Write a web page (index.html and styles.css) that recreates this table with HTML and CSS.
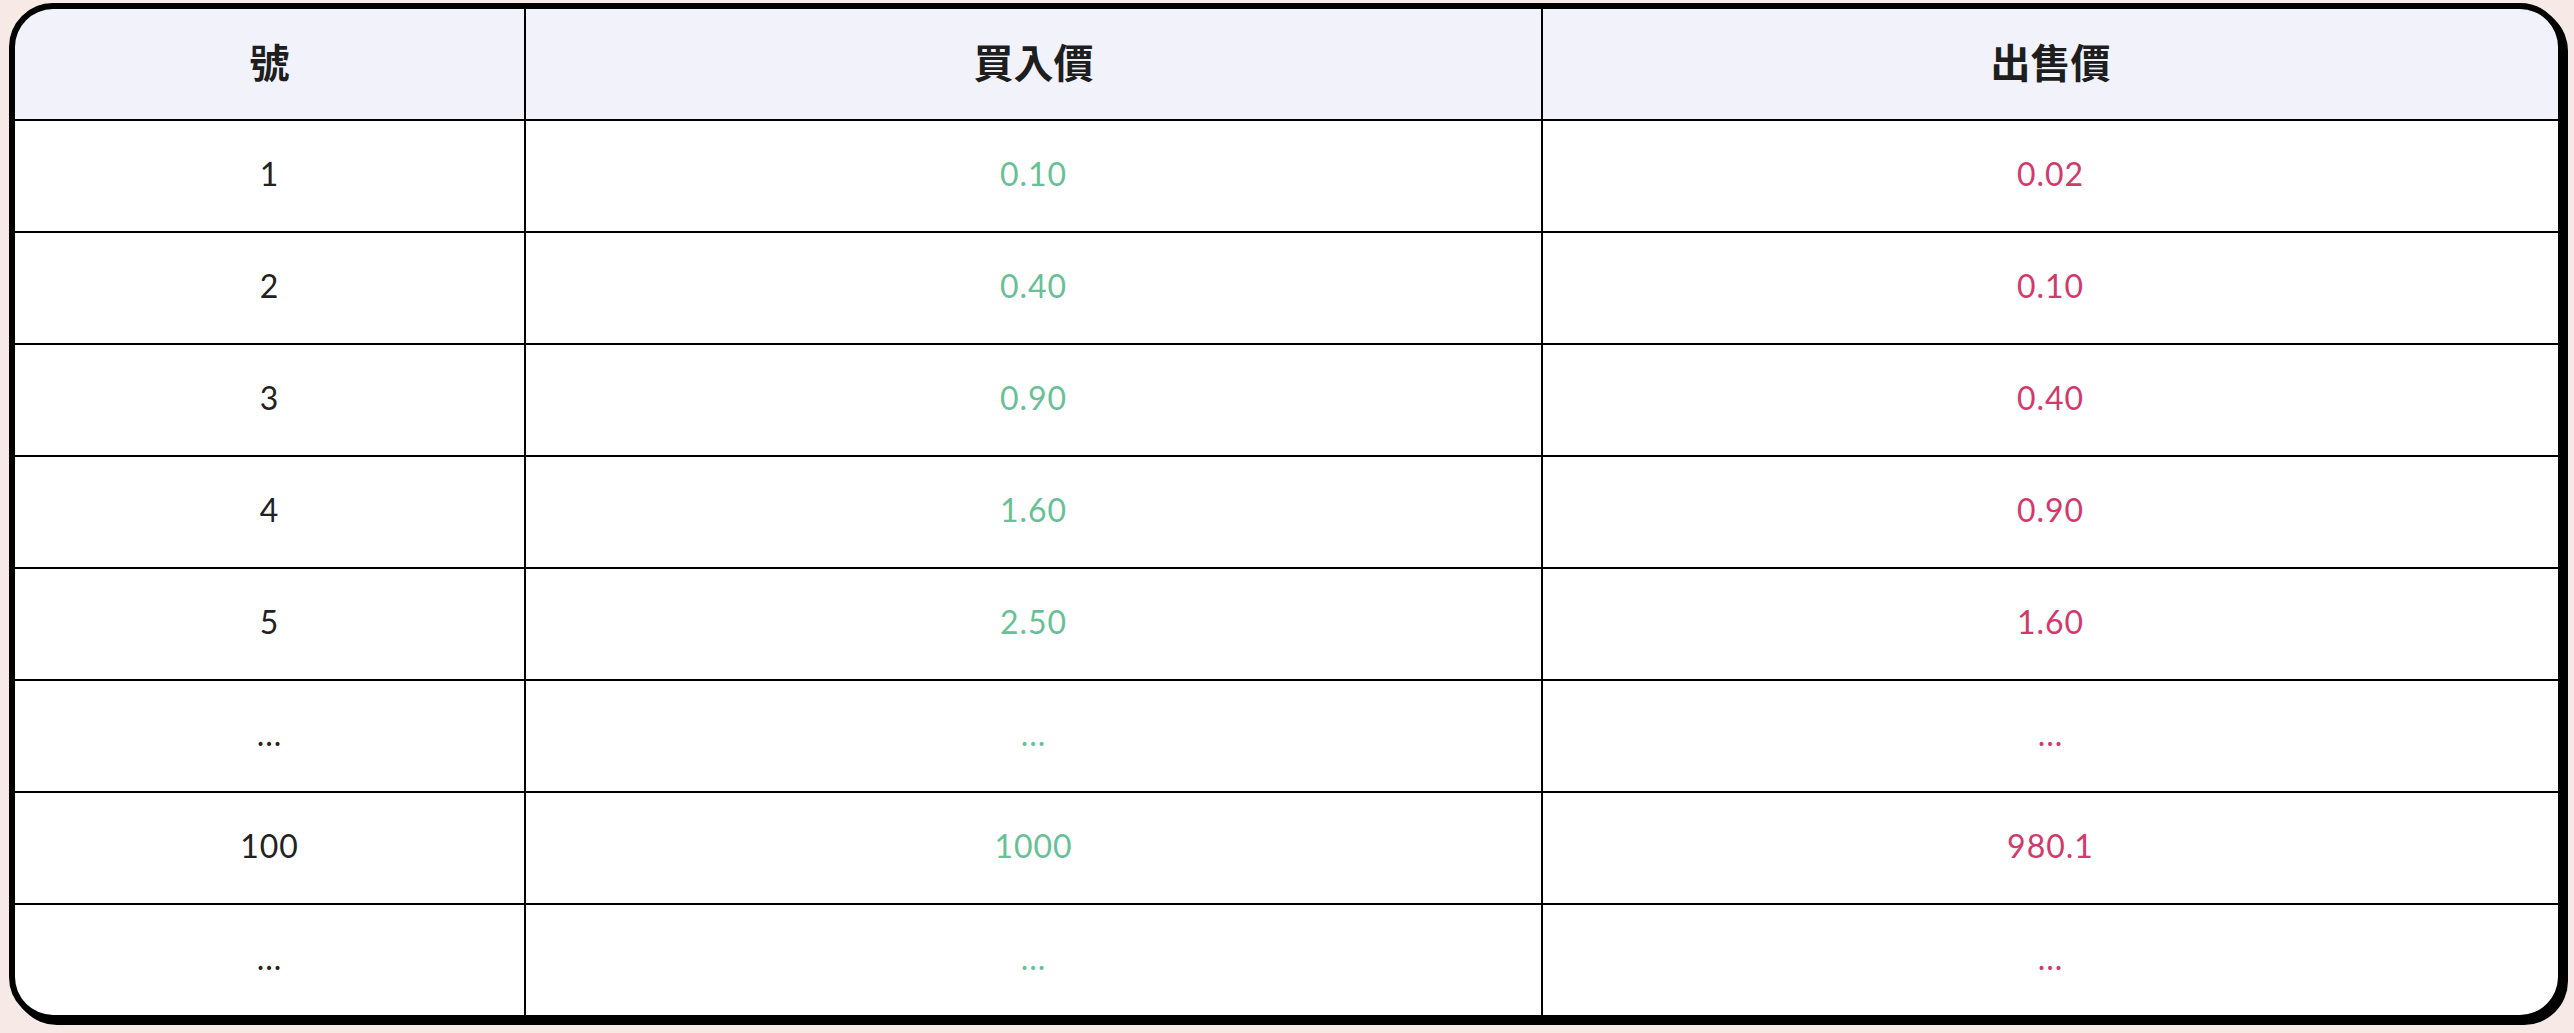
FILE: index.html
```html
<!DOCTYPE html>
<html lang="zh-Hant">
<head>
<meta charset="utf-8">
<title>價格表</title>
<link rel="stylesheet" href="styles.css">
</head>
<body>
<div class="table">
  <div class="cell head">號</div>
  <div class="cell head">買入價</div>
  <div class="cell head">出售價</div>

  <div class="cell num">1</div>
  <div class="cell buy">0.10</div>
  <div class="cell sell">0.02</div>

  <div class="cell num">2</div>
  <div class="cell buy">0.40</div>
  <div class="cell sell">0.10</div>

  <div class="cell num">3</div>
  <div class="cell buy">0.90</div>
  <div class="cell sell">0.40</div>

  <div class="cell num">4</div>
  <div class="cell buy">1.60</div>
  <div class="cell sell">0.90</div>

  <div class="cell num">5</div>
  <div class="cell buy">2.50</div>
  <div class="cell sell">1.60</div>

  <div class="cell num">...</div>
  <div class="cell buy">...</div>
  <div class="cell sell">...</div>

  <div class="cell num">100</div>
  <div class="cell buy">1000</div>
  <div class="cell sell">980.1</div>

  <div class="cell num">...</div>
  <div class="cell buy">...</div>
  <div class="cell sell">...</div>
</div>
</body>
</html>
```

FILE: styles.css
```css
html, body {
  margin: 0;
  padding: 0;
}

body {
  background: #f7eae6;
  padding: 3px 0 0 9px;
  width: 2574px;
  height: 1033px;
  box-sizing: border-box;
  overflow: hidden;
}

.table {
  box-sizing: border-box;
  width: 2555px;
  height: 1018px;
  border: 6px solid #000;
  border-radius: 44px;
  box-shadow: 4px 4px 0 #000;
  overflow: hidden;
  background: #000;
  display: grid;
  grid-template-columns: 509px 1015px 1fr;
  grid-auto-rows: 110px;
  gap: 2px;
}

.cell {
  box-sizing: border-box;
  background: #ffffff;
  display: flex;
  align-items: center;
  justify-content: center;
  padding-bottom: 5px;
  font-family: Lato, "Noto Sans", sans-serif;
  font-size: 32px;
  letter-spacing: 1px;
  color: #222222;
}

.head {
  background: #f1f2fa;
  font-family: "Noto Sans CJK TC", "Noto Sans CJK SC", sans-serif;
  font-weight: 700;
  font-size: 40px;
  letter-spacing: 0;
  padding-bottom: 6px;
  color: #1e1e1e;
}

.num {
  color: #222222;
}

.buy {
  color: #67c195;
}

.sell {
  color: #d13a6a;
}
```
